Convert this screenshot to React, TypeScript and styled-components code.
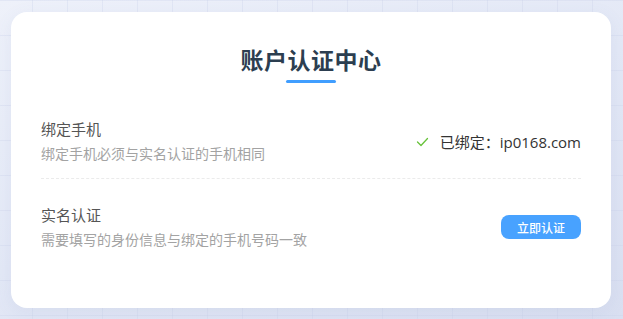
import React from 'react';
import styled, { createGlobalStyle } from 'styled-components';

const GlobalStyle = createGlobalStyle`
  html, body {
    margin: 0;
    padding: 0;
    height: 100%;
  }

  body {
    font-family: "Open Sans", "Noto Sans CJK SC", sans-serif;
    background-color: #e4e8f5;
    background-image:
      linear-gradient(rgba(200, 208, 232, 0.3) 1px, transparent 1px),
      linear-gradient(90deg, rgba(200, 208, 232, 0.3) 1px, transparent 1px),
      linear-gradient(160deg, #eef1fa 0%, #e3e8f6 50%, #d9dff1 100%);
    background-size: 35px 35px, 35px 35px, 100% 100%;
    background-position: -3px 0px, -3px 0px, 0 0;
  }
`;

const Page = styled.main`
  box-sizing: border-box;
  min-height: 100vh;
  padding: 12px 12px 11px 11px;
  display: flex;
  justify-content: center;
`;

const Card = styled.section`
  box-sizing: border-box;
  width: 600px;
  background: #fff;
  border-radius: 16px;
  padding: 33px 30px 40px;
  box-shadow: 0 4px 18px rgba(90, 110, 170, 0.08);
`;

const Header = styled.header`
  display: flex;
  flex-direction: column;
  align-items: center;
  margin-bottom: 10px;
`;

const Title = styled.h1`
  margin: 0;
  font-family: "Noto Sans CJK SC", sans-serif;
  font-size: 23px;
  line-height: 28px;
  font-weight: 700;
  letter-spacing: 0.5px;
  color: #2c3e50;
`;

const Underline = styled.span`
  display: block;
  width: 50px;
  height: 3px;
  margin-top: 7px;
  border-radius: 2px;
  background: #409eff;
`;

const Row = styled.div<{ $last?: boolean }>`
  display: flex;
  align-items: center;
  justify-content: space-between;
  padding: 25px 0 14px;
  border-bottom: ${(p) => (p.$last ? 'none' : '1px dashed #ebebeb')};
`;

const Info = styled.div`
  display: flex;
  flex-direction: column;
`;

const RowTitle = styled.div`
  font-family: "Noto Sans CJK SC", sans-serif;
  font-size: 15px;
  line-height: 22px;
  font-weight: 400;
  color: #555;
`;

const RowDesc = styled.div`
  margin-top: 2px;
  font-family: "Noto Sans CJK SC", sans-serif;
  font-size: 14px;
  line-height: 22px;
  color: #a3a3a3;
`;

const Status = styled.div`
  display: flex;
  align-items: center;
  gap: 11px;
  font-size: 15px;
  color: #333;
`;

const Mark = styled.svg`
  width: 13px;
  height: 13px;
  flex: none;
`;

const Action = styled.button`
  width: 80px;
  height: 24px;
  border: none;
  border-radius: 8px;
  background: #48a2ff;
  color: #fff;
  font-family: "Noto Sans CJK SC", sans-serif;
  font-size: 12px;
  font-weight: 500;
  cursor: pointer;
  padding: 0;
`;

export default function App() {
  return (
    <>
      <GlobalStyle />
      <Page>
        <Card>
          <Header>
            <Title>账户认证中心</Title>
            <Underline />
          </Header>

          <Row>
            <Info>
              <RowTitle>绑定手机</RowTitle>
              <RowDesc>绑定手机必须与实名认证的手机相同</RowDesc>
            </Info>
            <Status>
              <Mark viewBox="0 0 13 13" fill="none">
                <polyline
                  points="1.5,7 5,10.5 11.5,3.5"
                  stroke="#67c23a"
                  strokeWidth="1.3"
                  strokeLinecap="round"
                  strokeLinejoin="round"
                />
              </Mark>
              <span>已绑定：ip0168.com</span>
            </Status>
          </Row>

          <Row $last>
            <Info>
              <RowTitle>实名认证</RowTitle>
              <RowDesc>需要填写的身份信息与绑定的手机号码一致</RowDesc>
            </Info>
            <Action type="button">立即认证</Action>
          </Row>
        </Card>
      </Page>
    </>
  );
}
